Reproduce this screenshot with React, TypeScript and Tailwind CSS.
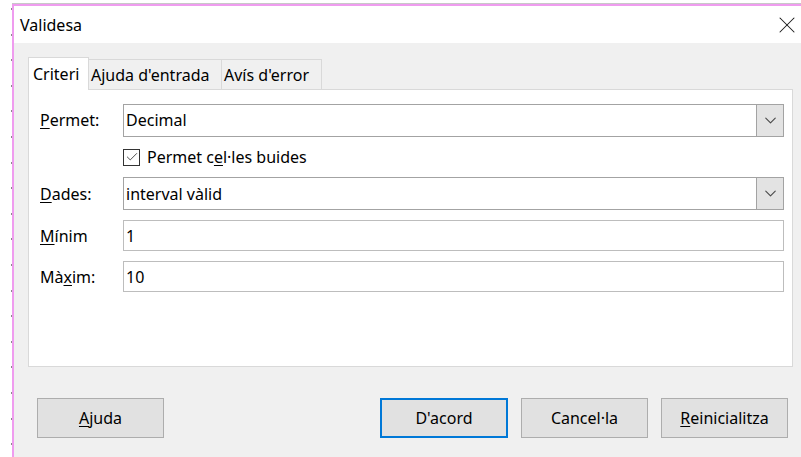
import { X, ChevronDown, Check } from 'lucide-react'

const FONT = { fontFamily: '"Noto Sans", "Open Sans", sans-serif' }

const TABS = [
  { label: 'Criteri', active: true, w: 'w-[61px]' },
  { label: "Ajuda d'entrada", active: false, w: 'w-[133px]' },
  { label: "Avís d'error", active: false, w: 'w-[100px]' },
]

function Combo({ value }: { value: string }) {
  return (
    <div className="flex h-[33px] flex-1 border border-[#a3a3a3] bg-white">
      <div className="flex flex-1 items-center px-[2px]">{value}</div>
      <div className="flex w-[27px] items-center justify-center border-l border-[#a3a3a3] bg-[#e3e3e3]">
        <ChevronDown size={19} strokeWidth={1.4} className="text-[#4a4a4a]" />
      </div>
    </div>
  )
}

function Field({ value }: { value: string }) {
  return (
    <div className="flex h-[31px] flex-1 items-center border border-[#bdbdbd] bg-white px-[2px]">
      {value}
    </div>
  )
}

function Row({ label, children, h }: { label: React.ReactNode; children: React.ReactNode; h: string }) {
  return (
    <div className={`flex items-center ${h}`}>
      <div className="w-[83px] shrink-0">{label}</div>
      {children}
    </div>
  )
}

function Btn({ children, primary }: { children: React.ReactNode; primary?: boolean }) {
  return (
    <button
      className={
        primary
          ? 'flex h-[40px] w-[128px] items-center justify-center border-2 border-[#0078d7] bg-[#e1e1e1]'
          : 'flex h-[40px] w-[127px] items-center justify-center border border-[#adadad] bg-[#e1e1e1]'
      }
    >
      {children}
    </button>
  )
}

export default function App() {
  return (
    <div className="flex h-[457px] w-[801px] overflow-hidden bg-white text-[16px] text-black" style={FONT}>
      {/* ruler ticks on the left margin */}
      <div className="flex w-[12px] shrink-0 flex-col items-end gap-[23.6px] pt-[8px]">
        {Array.from({ length: 18 }).map((_, i) => (
          <div key={i} className="h-[2px] w-[1px] bg-[#8a8a8a]" />
        ))}
      </div>

      <div className="flex flex-1 flex-col pt-[3px]">
        <div className="flex flex-1 flex-col border-t border-[#c8c8c8]">
          <div className="flex flex-1 flex-col border-l-2 border-t-2 border-[#ef9cef]">
            {/* title bar */}
            <div className="flex h-[37px] items-center justify-between bg-white pl-[6px] pr-0">
              <span className="text-[16px]">Validesa</span>
              <X size={28} strokeWidth={0.9} className="text-[#1a1a1a]" />
            </div>

            <div className="flex flex-1 flex-col bg-[#f0f0f0] pl-[14px] pr-[8px] pt-[14px]">
              {/* tabs */}
              <div className="flex h-[32px] items-end">
                {TABS.map(t => (
                  <div
                    key={t.label}
                    className={
                      t.active
                        ? `relative z-10 -mb-px flex h-[33px] ${t.w} items-center border border-b-0 border-[#d9d9d9] bg-white pl-[4px]`
                        : `flex h-[30px] ${t.w} items-center border border-b-0 border-l-0 border-[#d9d9d9] bg-[#f0f0f0] pl-[2px]`
                    }
                  >
                    {t.label}
                  </div>
                ))}
              </div>

              {/* tab page */}
              <div className="flex h-[278px] flex-col border border-[#d9d9d9] bg-white pl-[11px] pr-[8px] pt-[13px]">
                <Row h="h-[34px]" label={<><u className="underline-offset-2">P</u>ermet:</>}>
                  <Combo value="Decimal" />
                </Row>
                <div className="flex h-[40px] items-center pl-[83px]">
                  <div className="mr-[7px] flex h-[17px] w-[17px] items-center justify-center border border-[#333]">
                    <Check size={14} strokeWidth={1.6} className="text-[#444]" />
                  </div>
                  <span>
                    Permet c<u className="underline-offset-2">e</u>l·les buides
                  </span>
                </div>
                <Row h="h-[33px]" label={<><u className="underline-offset-2">D</u>ades:</>}>
                  <Combo value="interval vàlid" />
                </Row>
                <div className="h-[10px]" />
                <Row h="h-[31px]" label={<><u className="underline-offset-2">M</u>ínim</>}>
                  <Field value="1" />
                </Row>
                <div className="h-[10px]" />
                <Row h="h-[31px]" label={<>Mà<u className="underline-offset-2">x</u>im:</>}>
                  <Field value="10" />
                </Row>
              </div>

              {/* button row */}
              <div className="flex items-center pl-[9px] pr-[5px] pt-[31px]">
                <Btn>
                  <span><u className="underline-offset-2">A</u>juda</span>
                </Btn>
                <div className="flex-1" />
                <div className="flex gap-[13px]">
                  <Btn primary>D'acord</Btn>
                  <Btn>Cancel·la</Btn>
                  <Btn>
                    <span><u className="underline-offset-2">R</u>einicialitza</span>
                  </Btn>
                </div>
              </div>
            </div>
          </div>
        </div>
      </div>
    </div>
  )
}
